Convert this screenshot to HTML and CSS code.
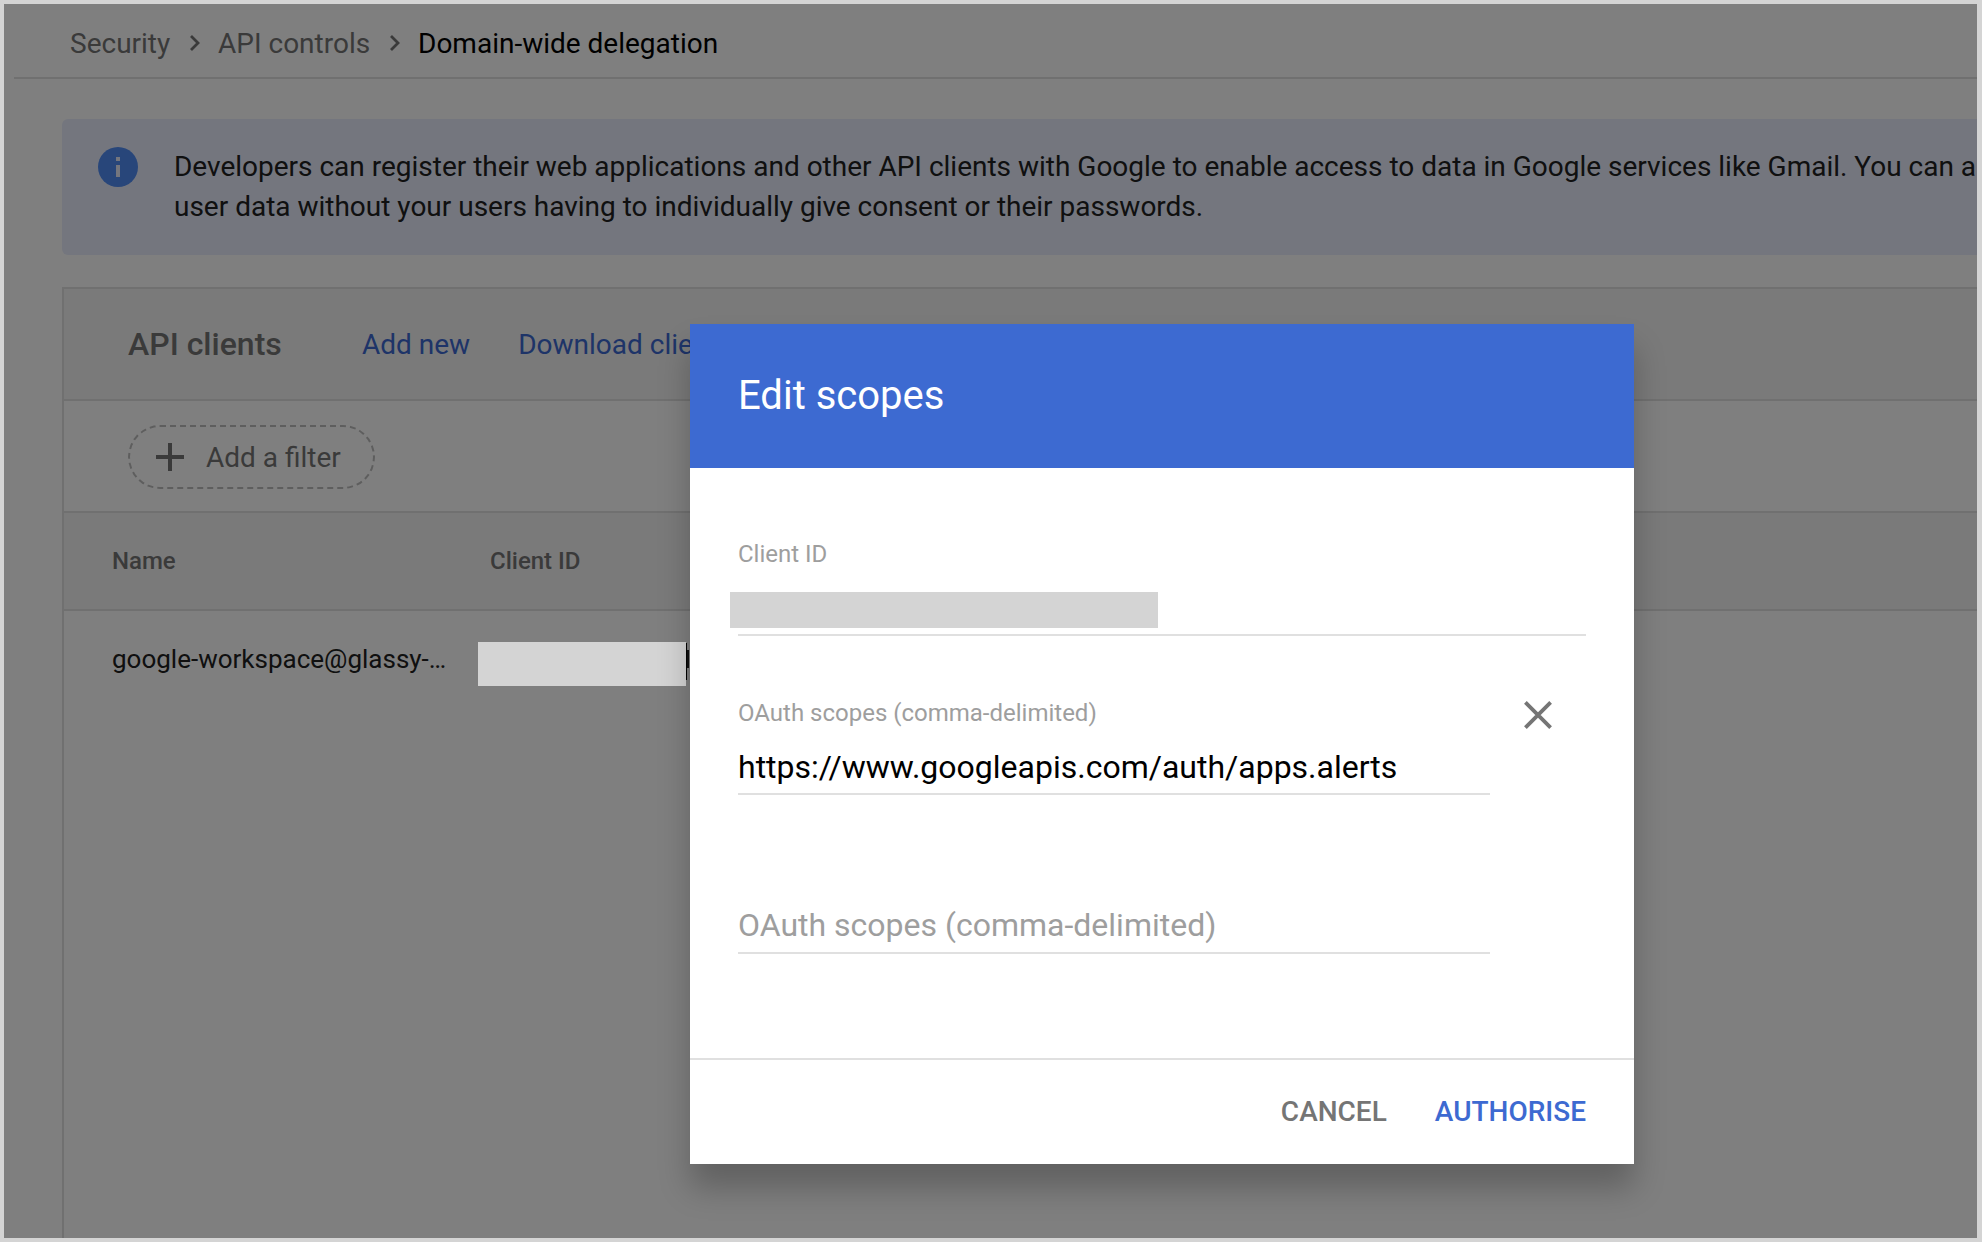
FILE: index.html
```html
<!DOCTYPE html>
<html lang="en-GB">
<head>
<meta charset="utf-8">
<title>Domain-wide delegation</title>
<link rel="stylesheet" href="styles.css">
</head>
<body>
<div class="app">
  <nav class="breadcrumb">
    <a class="crumb crumb-security">Security</a>
    <svg class="chevron" width="12" height="18" viewBox="0 0 12 18"><path d="M2 2l7 7-7 7"/></svg>
    <a class="crumb crumb-api">API controls</a>
    <svg class="chevron" width="12" height="18" viewBox="0 0 12 18"><path d="M2 2l7 7-7 7"/></svg>
    <span class="crumb crumb-current">Domain-wide delegation</span>
  </nav>
  <main class="content">
    <section class="banner">
      <svg class="info" width="40" height="40" viewBox="0 0 40 40"><circle cx="20" cy="20" r="20"/><path d="M18 18h4v12h-4zM18 10h4v4h-4z"/></svg>
      <p class="banner-text">Developers can register their web applications and other API clients with Google to enable access to data in Google services like Gmail. You can a<br>user data without your users having to individually give consent or their passwords.</p>
    </section>
    <section class="panel">
      <header class="panel-head">
        <h2 class="panel-title">API clients</h2>
        <a class="link">Add new</a>
        <a class="link">Download client info</a>
      </header>
      <div class="filters">
        <button class="filter">
          <svg width="28" height="28" viewBox="0 0 28 28"><path d="M12 0h4v12h12v4H16v12h-4V16H0v-4h12z"/></svg>
          <span>Add a filter</span>
        </button>
      </div>
      <div class="row row-head"><span>Name</span><span>Client ID</span></div>
      <div class="row row-data"><span class="name-cell">google-workspace@glassy-…</span><span class="id-cell"><i class="redacted"></i><i class="caret"></i><i class="glyph-edge"></i></span></div>
    </section>
  </main>
  <div class="scrim"></div>
  <div class="dialog" role="dialog">
    <header class="dialog-head">Edit scopes</header>
    <div class="dialog-body">
      <div class="field field-id">
        <label>Client ID</label>
        <div class="value"><i class="redacted-value"></i></div>
      </div>
      <div class="scope-row">
        <div class="field">
          <label>OAuth scopes (comma-delimited)</label>
          <div class="value">https://www.googleapis.com/auth/apps.alerts</div>
        </div>
        <svg class="remove" width="28" height="28" viewBox="0 0 28 28"><path d="M1.4 1.4l25.2 25.2M26.6 1.4L1.4 26.6"/></svg>
      </div>
      <div class="scope-row">
        <div class="field">
          <label></label>
          <div class="value placeholder">OAuth scopes (comma-delimited)</div>
        </div>
      </div>
    </div>
    <footer class="dialog-foot">
      <button class="btn">CANCEL</button>
      <button class="btn btn-primary">AUTHORISE</button>
    </footer>
  </div>
</div>
</body>
</html>
```
FILE: styles.css
```css
* { box-sizing: border-box; margin: 0; }
body {
  width: 1982px; height: 1242px; overflow: hidden;
  padding: 4px 5px 4px 4px;
  background: #d4d4d4;
  font-family: Roboto, sans-serif; font-size: 28px;
}
button { font: inherit; letter-spacing: inherit; background: none; border: 0; padding: 0; }
svg { display: block; flex: none; }
.app {
  position: relative; display: flex; flex-direction: column;
  height: 1234px; background: #fff; overflow: hidden;
}

.breadcrumb {
  display: flex; align-items: center; flex: none;
  height: 75px; margin-left: 10px; padding: 0 0 8px 56px;
  border-bottom: 2px solid #e0e0e0;
  line-height: 40px; color: #757575; white-space: nowrap;
}
.crumb { flex: none; padding-top: 15px; }
.crumb-security { width: 119px; }
.crumb-api { width: 153px; margin-left: 17px; }
.crumb-current { margin-left: 17px; color: #000; }
.chevron { margin-top: 13px; fill: none; stroke: #757575; stroke-width: 2.8; }
.crumb-api + .chevron { margin-left: 18px; }

.content { display: flex; flex-direction: column; flex: 1; padding: 40px 0 0 58px; gap: 32px; }
.banner {
  display: flex; flex: none; gap: 36px; height: 136px; padding: 28px 0 0 36px;
  background: #e8edfd; border-radius: 6px 0 0 6px; overflow: hidden;
}
.info { fill: #508cf4; }
.info path { fill: #e8edfd; }
.banner-text { flex: none; line-height: 40px; letter-spacing: -.006px; color: #212121; white-space: nowrap; }

.panel { display: flex; flex-direction: column; flex: 1; border: solid #e0e0e0; border-width: 2px 0 0 2px; }
.panel-head {
  display: flex; align-items: center; height: 112px; padding-left: 64px;
  background: #f5f5f5; border-bottom: 2px solid #e0e0e0; white-space: nowrap;
}
.panel-title { width: 234px; font-size: 32px; font-weight: 500; color: #757575; }
.link { color: #3c69d1; margin-right: 48px; }
.filters { display: flex; align-items: center; height: 112px; padding: 2px 0 0 64px; border-bottom: 2px solid #e0e0e0; }
.filter {
  display: flex; align-items: center; gap: 22px; width: 247px; height: 64px; padding-left: 26px;
  border: 2px dashed #bdbdbd; border-radius: 32px; color: #757575;
}
.filter svg { fill: #757575; }
.row { display: grid; grid-template-columns: 378px 1fr; align-items: center; padding-left: 48px; }
.row-head {
  height: 98px; background: #f5f5f5; border-bottom: 2px solid #e0e0e0;
  font-size: 24px; font-weight: 500; color: #757575;
}
.row-data { height: 98px; font-size: 26px; color: #212121; }
.name-cell { padding-bottom: 2px; }
.id-cell { display: flex; position: relative; z-index: 2; margin: 8px 0 0 -12px; }
.redacted { width: 208px; height: 44px; background: #d4d4d4; }
.caret { width: 1px; height: 37px; margin-top: 1px; background: #000; }
.glyph-edge { width: 2px; height: 18px; margin-top: 8px; background: #101010; }

.scrim { position: absolute; inset: 0; z-index: 1; background: rgba(0, 0, 0, .5); }
.dialog {
  position: absolute; z-index: 3; left: 686px; top: 320px; width: 944px; height: 840px;
  display: flex; flex-direction: column;
  background: #fff; box-shadow: 0 24px 30px rgba(0, 0, 0, .24);
}
.dialog-head { height: 144px; padding-left: 48px; font-size: 40px; line-height: 144px; color: #fff; background: #3d6ad1; }
.dialog-body { flex: 1; padding: 66px 48px 0; }
.field { display: flex; flex-direction: column; width: 752px; height: 102px; border-bottom: 2px solid #e0e0e0; }
.field-id { width: 848px; }
.field label { height: 54px; font-size: 24px; line-height: 40px; color: #9e9e9e; }
.value { font-size: 32px; line-height: 40px; color: #000; white-space: nowrap; }
.placeholder { margin-top: -1px; color: #9e9e9e; }
.redacted-value { display: block; width: 428px; height: 36px; margin: 4px 0 0 -8px; background: #d4d4d4; }
.scope-row { display: flex; margin-top: 57px; gap: 34px; }
.remove { margin-top: 8px; fill: none; stroke: #757575; stroke-width: 3.8; }
.dialog-foot {
  display: flex; justify-content: flex-end; align-items: center; gap: 48px;
  height: 106px; padding: 0 48px 2px 0; border-top: 2px solid #e0e0e0;
}
.btn { font-weight: 500; color: #757575; }
.btn-primary { color: #3d6ad1; }
```
